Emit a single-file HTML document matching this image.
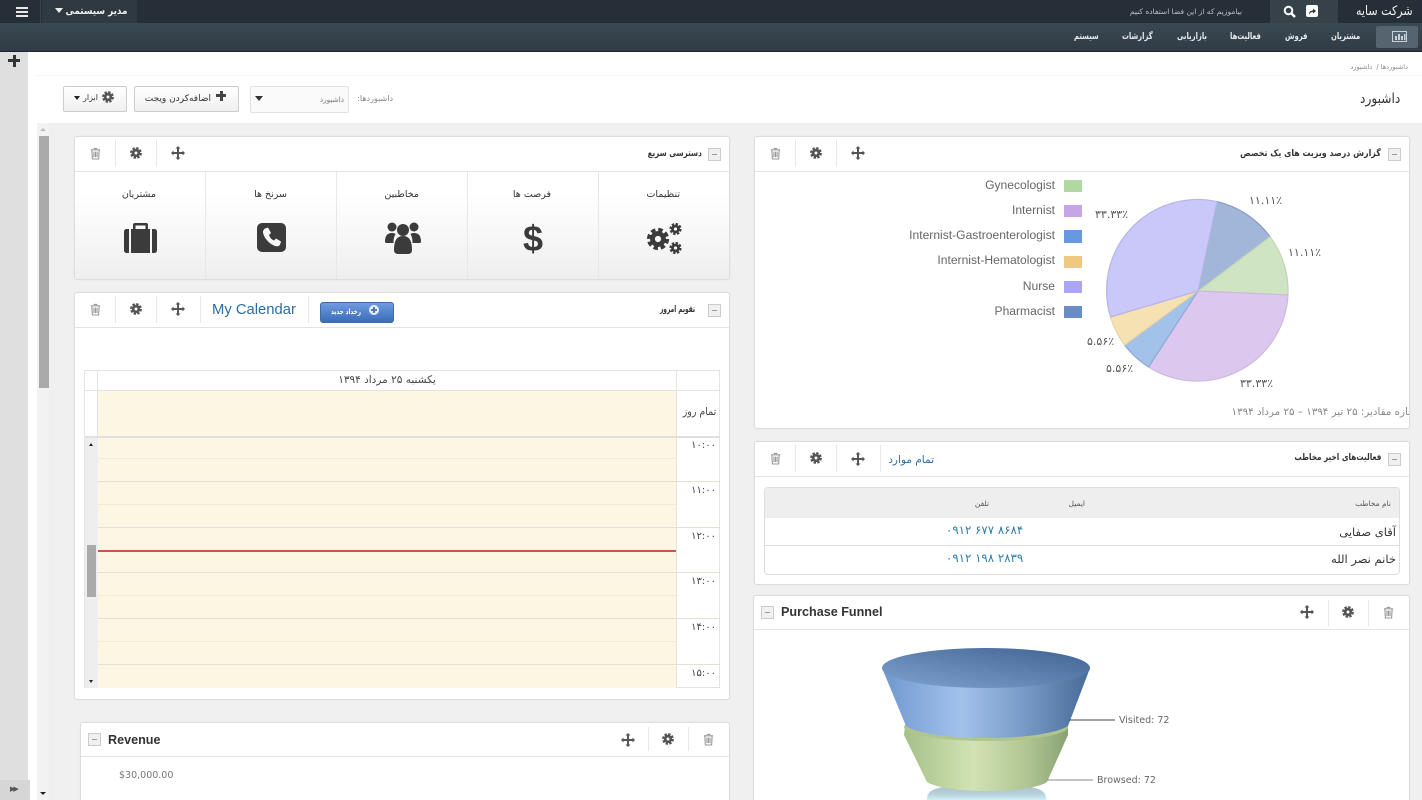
<!DOCTYPE html>
<html lang="fa"><head><meta charset="utf-8"><title>داشبورد</title>
<style>
html,body{margin:0;padding:0;width:1422px;height:800px;overflow:hidden}
body{position:relative;background:#f0f0f0;font-family:"DejaVu Sans","Liberation Sans",sans-serif;color:#333}
#root{position:absolute;left:0;top:0;width:1422px;height:800px;overflow:hidden}
.a{position:absolute}
.t{position:absolute;white-space:nowrap;line-height:1}
.r{direction:rtl;text-align:right;transform-origin:right center}
.e{font-family:"Liberation Sans",sans-serif}
.p{position:absolute;background:#fff;border:1px solid #ddd;border-radius:3px;box-sizing:border-box;box-shadow:0 0 1px #ddd}
.h{position:absolute;height:1px;background:#e3e3e3}
.v{position:absolute;width:1px;background:#e8e8e8}
.m{position:absolute;width:13px;height:13px;border:1px solid #ccc;background:#f0f0f0;box-sizing:border-box}
.m:after{content:"";position:absolute;left:3px;top:5px;width:5px;height:1px;background:#999}
svg{position:absolute;overflow:visible}
.nav{position:absolute;top:31px;color:#e6eaed;font-size:9px;font-weight:bold;direction:rtl;white-space:nowrap;line-height:12px;transform:scaleX(.76);transform-origin:left center}
.hl{position:absolute;left:98px;height:1px;background:#f1ebd3}
.hh{position:absolute;left:98px;width:622px;height:1px;background:#e3e1d3}
.tm{position:absolute;left:676px;width:40px;text-align:right;font-size:10px;color:#444;line-height:1}
</style></head><body><div id="root">
<svg width="0" height="0" style="position:absolute"><defs>
<symbol id="trash" viewBox="0 0 12 14"><path d="M4 1.500h4M1 3h10M2 3l.6 10h6.800L10 3M4.300 5v6M6 5v6M7.700 5v6" fill="none" stroke="#999" stroke-width="1.200"/></symbol>
<symbol id="gear" viewBox="0 0 14 14"><g fill="none" stroke="#555"><circle cx="7" cy="7" r="3.300" stroke-width="3.200"/><circle cx="7" cy="7" r="5.600" stroke-width="2.600" stroke-dasharray="2.800 1.600"/></g></symbol>
<symbol id="move" viewBox="0 0 14 14"><path fill="#555" d="M7 0l2.500 2.500H8V6h3.500V4.500L14 7l-2.500 2.500V8H8v3.500h1.500L7 14l-2.500-2.500H6V8H2.500v1.500L0 7l2.500-2.500V6H6V2.500H4.500z"/></symbol>
<linearGradient id="g1" x1="0" x2="1" y1="0" y2="0"><stop offset="0" stop-color="#6f97cf"/><stop offset=".38" stop-color="#a2c2ec"/><stop offset=".7" stop-color="#7598c4"/><stop offset="1" stop-color="#466a97"/></linearGradient>
<linearGradient id="g1t" x1="0" x2="1" y1="1" y2="0"><stop offset="0" stop-color="#7fa2d2"/><stop offset="1" stop-color="#3f6290"/></linearGradient>
<linearGradient id="g2" x1="0" x2="1" y1="0" y2="0"><stop offset="0" stop-color="#a5c088"/><stop offset=".42" stop-color="#d2e3b3"/><stop offset=".75" stop-color="#b0c592"/><stop offset="1" stop-color="#8aa273"/></linearGradient>
<linearGradient id="g3" x1="0" x2="0" y1="0" y2="1"><stop offset="0" stop-color="#a9c0c8"/><stop offset=".6" stop-color="#b5d0d8"/><stop offset="1" stop-color="#d0eef5"/></linearGradient>
</defs></svg>

<!-- top bars -->
<div class="a" style="left:0;top:0;width:1422px;height:23px;background:#262f37"></div>
<div class="a" style="left:0;top:23px;width:1422px;height:28px;background:linear-gradient(#3a4852,#303b45)"></div>
<div class="a" style="left:0;top:51px;width:1422px;height:1px;background:#1d242a"></div>
<div class="a" style="left:42px;top:0;width:95px;height:23px;background:#2f3941"></div>
<div class="a" style="left:40px;top:0;width:1px;height:23px;background:#38434c"></div>
<div class="a" style="left:16px;top:7px;width:12px;height:2px;background:#e8e8e8;box-shadow:0 4px 0 #e8e8e8,0 8px 0 #e8e8e8"></div>
<div class="a" style="left:55px;top:8px;width:0;height:0;border:4px solid transparent;border-top:5px solid #eee;border-bottom:0"></div>
<div class="t r" style="right:1295px;top:5px;font-size:10px;font-weight:bold;color:#f0f0f0;line-height:14px;transform:scaleX(.88)">مدیر سیستمی</div>
<div class="t r" style="right:180px;top:6px;font-size:7.500px;color:#b8bfc5;line-height:11px">بیاموزیم که از این فضا استفاده کنیم</div>
<div class="a" style="left:1270px;top:0;width:68px;height:23px;background:#36414a"></div>
<div class="a" style="left:1338px;top:0;width:84px;height:23px;background:#262f37"></div>
<div class="a" style="left:1337px;top:0;width:0;height:0;border-style:solid;border-width:11.500px 11px 11.500px 0;border-color:transparent #262f37 transparent transparent"></div>
<svg style="left:1283px;top:5px" width="13" height="13" viewBox="0 0 13 13"><circle cx="5.500" cy="5.500" r="3.800" fill="none" stroke="#fff" stroke-width="2"/><path d="M8.500 8.500L12 12" stroke="#fff" stroke-width="2.500"/></svg>
<svg style="left:1306px;top:5px" width="12" height="12" viewBox="0 0 12 12"><rect width="12" height="12" rx="2" fill="#fff"/><path d="M3 9.500C3 6.500 5 5.500 7 5.500V3.500L10 6 7 8.500V7C5 7 4 8 3 9.500z" fill="#2b343c"/></svg>
<div class="t r" style="right:9px;top:4px;font-size:13px;color:#f2f2f2;line-height:16px;transform:scaleX(.85)">شرکت سایه</div>

<div class="a" style="left:1376px;top:26px;width:42px;height:22px;background:#56646f;border-radius:2px"></div>
<svg style="left:1392px;top:31px" width="15" height="11" viewBox="0 0 15 11"><rect x=".5" y=".5" width="14" height="10" fill="none" stroke="#c8d0d6"/><path d="M3 9V5h2v4zM6 9V3h2v6zM9 9V5h2v4zM12 9V3h1.500v6z" fill="#c8d0d6"/></svg>
<div class="nav" style="left:1331px">مشتریان</div>
<div class="nav" style="left:1285px">فروش</div>
<div class="nav" style="left:1230px">فعالیت‌ها</div>
<div class="nav" style="left:1177px">بازاریابی</div>
<div class="nav" style="left:1122px">گزارشات</div>
<div class="nav" style="left:1074px">سیستم</div>

<!-- sidebar -->
<div class="a" style="left:0;top:52px;width:28px;height:748px;background:#dfdfdf"></div>
<div class="a" style="left:28px;top:52px;width:9px;height:748px;background:#fff"></div>
<div class="a" style="left:8px;top:59px;width:12px;height:3px;background:#333"></div>
<div class="a" style="left:12.500px;top:55px;width:3px;height:12px;background:#333"></div>
<div class="a" style="left:0;top:780px;width:30px;height:20px;background:#d6d6d6"></div>
<div class="t" style="left:10px;top:786px;font-size:7px;color:#555;letter-spacing:-2px">▶▶</div>

<!-- page header -->
<div class="a" style="left:37px;top:52px;width:1385px;height:71px;background:#fff"></div>
<div class="h" style="left:37px;top:75px;width:1385px;background:#f3f3f3"></div>
<div class="t r" style="right:14px;top:62px;font-size:6.600px;color:#888;line-height:10px">داشبوردها /&nbsp; داشبورد</div>
<div class="t r" style="right:22px;top:90px;font-size:14px;color:#333;line-height:18px;transform:scaleX(.87)">داشبورد</div>

<div class="a" style="left:63px;top:86px;width:64px;height:26px;box-sizing:border-box;border:1px solid #ccc;border-radius:2px;background:linear-gradient(#fff,#f0f0f0)"></div>
<div class="a" style="left:74px;top:96px;width:0;height:0;border:3px solid transparent;border-top:4px solid #222;border-bottom:0"></div>
<div class="t r" style="right:1324px;top:92px;font-size:8px;color:#333;line-height:12px">ابزار</div>
<svg style="left:102px;top:91px" width="12" height="12"><use href="#gear"/></svg>
<div class="a" style="left:134px;top:86px;width:105px;height:26px;box-sizing:border-box;border:1px solid #ccc;border-radius:2px;background:linear-gradient(#fff,#f0f0f0)"></div>
<div class="t r" style="right:1211px;top:93px;font-size:9px;color:#333;line-height:12px">اضافه‌کردن ویجت</div>
<div class="a" style="left:216px;top:94px;width:10px;height:3px;background:#444"></div>
<div class="a" style="left:219.500px;top:91px;width:3px;height:10px;background:#444"></div>
<div class="a" style="left:250px;top:86px;width:99px;height:27px;box-sizing:border-box;border:1px solid #e2e2e2;border-radius:2px;background:#fafafa"></div>
<div class="a" style="left:255px;top:96px;width:0;height:0;border:4px solid transparent;border-top:5px solid #333;border-bottom:0"></div>
<div class="t r" style="right:1078px;top:94px;font-size:7.300px;color:#777;line-height:11px">داشبورد</div>
<div class="t r" style="right:1029px;top:93px;font-size:8px;color:#888;line-height:11px">داشبوردها:</div>

<!-- main scrollbar -->
<div class="a" style="left:37px;top:123px;width:12px;height:677px;background:#f2f2f2"></div>
<div class="a" style="left:38.500px;top:136px;width:10px;height:252px;background:#aaa"></div>
<div class="a" style="left:40px;top:128px;width:0;height:0;border:3px solid transparent;border-bottom:3px solid #bbb;border-top:0"></div>
<div class="a" style="left:40px;top:792px;width:0;height:0;border:3px solid transparent;border-top:3px solid #222;border-bottom:0"></div>

<!-- pie panel -->
<div class="p" style="left:754px;top:136px;width:656px;height:293px"></div>
<div class="h" style="left:755px;top:171px;width:654px"></div>
<div class="v" style="left:795px;top:140px;height:27px"></div><div class="v" style="left:836px;top:140px;height:27px"></div>
<svg style="left:770px;top:147px" width="11" height="13"><use href="#trash"/></svg>
<svg style="left:810px;top:147px" width="12" height="12"><use href="#gear"/></svg>
<svg style="left:851px;top:146px" width="14" height="14"><use href="#move"/></svg>
<div class="m" style="left:1388px;top:148px"></div>
<div class="t r" style="right:41px;top:148px;font-size:9px;font-weight:bold;color:#333;line-height:13px;transform:scaleX(.88)">گزارش درصد ویزیت های یک تخصص</div>

<div class="t e" style="right:367px;top:179px;font-size:12.100px;color:#666">Gynecologist</div>
<div class="t e" style="right:367px;top:204px;font-size:12.100px;color:#666">Internist</div>
<div class="t e" style="right:367px;top:229px;font-size:12.100px;color:#666">Internist-Gastroenterologist</div>
<div class="t e" style="right:367px;top:254px;font-size:12.100px;color:#666">Internist-Hematologist</div>
<div class="t e" style="right:367px;top:280px;font-size:12.100px;color:#666">Nurse</div>
<div class="t e" style="right:367px;top:305px;font-size:12.100px;color:#666">Pharmacist</div>
<div class="a" style="left:1064px;top:180px;width:18px;height:12px;background:#b1d8a2"></div>
<div class="a" style="left:1064px;top:205px;width:18px;height:12px;background:#c5a5e6"></div>
<div class="a" style="left:1064px;top:230px;width:18px;height:13px;background:#6699dd"></div>
<div class="a" style="left:1064px;top:256px;width:18px;height:12px;background:#eec97f"></div>
<div class="a" style="left:1064px;top:281px;width:18px;height:12px;background:#aaa5f5"></div>
<div class="a" style="left:1064px;top:306px;width:18px;height:12px;background:#6a8cc4"></div>

<svg style="left:0;top:0" width="1422" height="800">
<g stroke-width="1.200" stroke-linejoin="round">
<path d="M1198 291L1217 201.600A91 91 0 0 1 1270 236.700Z" fill="#a1b6d8" stroke="#8799c8"/>
<path d="M1198 291L1270 236.700A91 91 0 0 1 1288 295Z" fill="#cfe4c3" stroke="#bfd4b4"/>
<path d="M1198 291L1288 295A91 91 0 0 1 1148.600 367Z" fill="#dcc8ee" stroke="#cdb9df"/>
<path d="M1198 291L1148.600 367A91 91 0 0 1 1124.600 345Z" fill="#a3c2ea" stroke="#8fa9d8"/>
<path d="M1198 291L1124.600 345A91 91 0 0 1 1110.500 317Z" fill="#f5e1b2" stroke="#e6d3a6"/>
<path d="M1198 291L1110.500 317A91 91 0 0 1 1217 201.600Z" fill="#c9c8f8" stroke="#b8b5e6"/>
</g></svg>
<div class="t" style="left:1249px;top:195px;font-size:11px;color:#555">۱۱.۱۱٪</div>
<div class="t" style="left:1288px;top:247px;font-size:11px;color:#555">۱۱.۱۱٪</div>
<div class="t" style="left:1095px;top:209px;font-size:11px;color:#555">۳۳.۳۳٪</div>
<div class="t" style="left:1240px;top:378px;font-size:11px;color:#555">۳۳.۳۳٪</div>
<div class="t" style="left:1087px;top:336px;font-size:11px;color:#555">۵.۵۶٪</div>
<div class="t" style="left:1106px;top:363px;font-size:11px;color:#555">۵.۵۶٪</div>
<div class="a" style="left:1220px;top:403px;width:189px;height:18px;overflow:hidden"><div class="t r" style="right:-2px;top:3px;font-size:10.300px;color:#888;line-height:13px">بازه مقادیر: ۲۵ تیر ۱۳۹۴ – ۲۵ مرداد ۱۳۹۴</div></div>

<!-- contacts panel -->
<div class="p" style="left:754px;top:441px;width:656px;height:144px"></div>
<div class="h" style="left:755px;top:476px;width:654px"></div>
<div class="v" style="left:795px;top:445px;height:27px"></div><div class="v" style="left:836px;top:445px;height:27px"></div><div class="v" style="left:880px;top:445px;height:27px"></div>
<svg style="left:770px;top:452px" width="11" height="13"><use href="#trash"/></svg>
<svg style="left:810px;top:452px" width="12" height="12"><use href="#gear"/></svg>
<svg style="left:851px;top:452px" width="14" height="14"><use href="#move"/></svg>
<div class="t r" style="right:488px;top:453px;font-size:10.500px;color:#2d6ca2;line-height:14px">تمام موارد</div>
<div class="m" style="left:1388px;top:453px"></div>
<div class="t r" style="right:41px;top:452px;font-size:9px;font-weight:bold;color:#333;line-height:13px;transform:scaleX(.81)">فعالیت‌های اخیر مخاطب</div>
<div class="a" style="left:764px;top:487px;width:636px;height:88px;box-sizing:border-box;border:1px solid #ddd;border-radius:4px;overflow:hidden;background:#fff">
<div class="a" style="left:0;top:0;width:636px;height:30px;background:#eee"></div>
<div class="a" style="left:0;top:57px;width:636px;height:1px;background:#ddd"></div>
</div>
<div class="t r" style="right:31px;top:499px;font-size:7.500px;color:#555;line-height:10px">نام مخاطب</div>
<div class="t r" style="right:337px;top:499px;font-size:7.500px;color:#555;line-height:10px">ایمیل</div>
<div class="t r" style="right:433px;top:499px;font-size:7.500px;color:#555;line-height:10px">تلفن</div>
<div class="t r" style="right:26px;top:525px;font-size:11.500px;color:#333;line-height:15px">آقای صفایی</div>
<div class="t r" style="right:26px;top:552px;font-size:11.500px;color:#333;line-height:15px">خانم نصر الله</div>
<div class="t" style="left:946px;top:525px;font-size:11.800px;color:#2d7cb0;letter-spacing:.2px">۰۹۱۲ ۶۷۷ ۸۶۸۴</div>
<div class="t" style="left:946px;top:553px;font-size:11.800px;color:#2d7cb0;letter-spacing:.2px">۰۹۱۲ ۱۹۸ ۲۸۳۹</div>

<!-- funnel panel -->
<div class="p" style="left:753px;top:595px;width:657px;height:215px"></div>
<div class="h" style="left:754px;top:629px;width:655px"></div>
<div class="m" style="left:761px;top:606px"></div>
<div class="t e" style="left:781px;top:606px;font-size:12.600px;font-weight:bold;color:#333">Purchase Funnel</div>
<div class="v" style="left:1328px;top:600px;height:26px"></div><div class="v" style="left:1368px;top:600px;height:26px"></div>
<svg style="left:1300px;top:605px" width="14" height="14"><use href="#move"/></svg>
<svg style="left:1342px;top:606px" width="12" height="12"><use href="#gear"/></svg>
<svg style="left:1383px;top:606px" width="11" height="13"><use href="#trash"/></svg>
<svg style="left:0;top:0" width="1422" height="800">
<path d="M927 800C927 790 932 785 987 784 1042 785 1046 790 1046 800Z" fill="url(#g3)"/>
<path d="M904 735L905 726H1068L1068 735 1047 782C1030 794 945 794 927 782Z" fill="url(#g2)"/>
<ellipse cx="986" cy="727" rx="82" ry="14" fill="#b0c48e"/>
<path d="M882 668L906 726C930 742 1042 742 1068 726L1090 668Z" fill="url(#g1)"/>
<ellipse cx="986" cy="668" rx="104" ry="20" fill="url(#g1t)"/>
<path d="M1069 720H1115" stroke="#444" stroke-width="1"/>
<path d="M1047 780H1093" stroke="#888" stroke-width="1"/>
</svg>
<div class="t" style="left:1119px;top:716px;font-size:9.500px;color:#666;font-family:'DejaVu Sans',sans-serif">Visited: 72</div>
<div class="t" style="left:1097px;top:776px;font-size:9.500px;color:#666;font-family:'DejaVu Sans',sans-serif">Browsed: 72</div>

<!-- quick access -->
<div class="p" style="left:74px;top:136px;width:656px;height:144px"></div>
<div class="a" style="left:75px;top:172px;width:654px;height:107px;background:linear-gradient(#fff 20%,#efefef)"></div>
<div class="h" style="left:75px;top:171px;width:654px"></div>
<div class="v" style="left:115px;top:140px;height:27px"></div><div class="v" style="left:156px;top:140px;height:27px"></div>
<div class="v" style="left:205px;top:172px;height:107px"></div><div class="v" style="left:336px;top:172px;height:107px"></div><div class="v" style="left:467px;top:172px;height:107px"></div><div class="v" style="left:598px;top:172px;height:107px"></div>
<svg style="left:90px;top:147px" width="11" height="13"><use href="#trash"/></svg>
<svg style="left:130px;top:147px" width="12" height="12"><use href="#gear"/></svg>
<svg style="left:171px;top:146px" width="14" height="14"><use href="#move"/></svg>
<div class="m" style="left:708px;top:148px"></div>
<div class="t r" style="right:720px;top:148px;font-size:9px;font-weight:bold;color:#333;line-height:13px;transform:scaleX(.8)">دسترسی سریع</div>
<div class="t r" style="right:742px;top:188px;font-size:9.500px;color:#333;line-height:13px">تنظیمات</div>
<div class="t r" style="right:871px;top:188px;font-size:9.500px;color:#333;line-height:13px">فرصت ها</div>
<div class="t r" style="right:1003px;top:188px;font-size:9.500px;color:#333;line-height:13px">مخاطبین</div>
<div class="t r" style="right:1135px;top:188px;font-size:9.500px;color:#333;line-height:13px">سرنخ ها</div>
<div class="t r" style="right:1266px;top:188px;font-size:9.500px;color:#333;line-height:13px">مشتریان</div>
<svg style="left:123px;top:222px" width="35" height="32" viewBox="0 0 35 32"><path fill="#3b3b3b" d="M10 7V3a2 2 0 0 1 2-2h11a2 2 0 0 1 2 2v4h-2.500V3.500h-10V7z"/><path fill="#3b3b3b" d="M1 9.500A2.500 2.500 0 0 1 3.500 7H6v24H3.500A2.500 2.500 0 0 1 1 28.500zM8 7h19v24H8zM29 7h2.500A2.500 2.500 0 0 1 34 9.500v19a2.500 2.500 0 0 1-2.500 2.500H29z"/></svg>
<svg style="left:257px;top:223px" width="29" height="29" viewBox="0 0 29 29"><rect width="29" height="29" rx="5" fill="#3b3b3b"/><path fill="#f7f7f7" d="M8 5.500l3-1 3 5.500-2 2c.8 2.500 2.500 4.500 5 5.500l2-2 5 3-1 3.200c-.8 1.300-2.500 1.800-4 1.500C13.500 22 7 15.500 6 9.500c-.2-1.600.7-3.200 2-4z"/></svg>
<svg style="left:385px;top:221px" width="36" height="34" viewBox="0 0 36 34"><g fill="#3b3b3b"><circle cx="7" cy="6" r="4.500"/><circle cx="29" cy="6" r="4.500"/><path d="M0 21c0-6 2-9 7-9 1.500 0 2.500.3 3.500 1-.8 1.500-2 4-2 8v1H2c-1.500 0-2-.5-2-1zM36 21c0-6-2-9-7-9-1.500 0-2.500.3-3.500 1 .8 1.500 2 4 2 8v1H34c1.500 0 2-.5 2-1z"/><circle cx="18" cy="9" r="6"/><path d="M9 29c0-8 2-14 9-14s9 6 9 14c0 3-2 4-4 4H13c-2 0-4-1-4-4z"/></g></svg>
<div class="t e" style="left:523px;top:217px;font-size:36px;color:#3b3b3b;line-height:44px;font-weight:bold">$</div>
<svg style="left:646px;top:222px" width="36" height="32" viewBox="0 0 36 32"><g fill="none" stroke="#3b3b3b"><circle cx="12" cy="17" r="5.500" stroke-width="4.800"/><circle cx="12" cy="17" r="9.200" stroke-width="3.800" stroke-dasharray="4.400 2.820"/><circle cx="29.500" cy="7" r="3" stroke-width="2.800"/><circle cx="29.500" cy="7" r="5" stroke-width="2.200" stroke-dasharray="2.400 1.520"/><circle cx="29.500" cy="26" r="3" stroke-width="2.800"/><circle cx="29.500" cy="26" r="5" stroke-width="2.200" stroke-dasharray="2.400 1.520"/></g></svg>

<!-- calendar panel -->
<div class="p" style="left:74px;top:292px;width:656px;height:408px"></div>
<div class="h" style="left:75px;top:327px;width:654px"></div>
<div class="v" style="left:115px;top:296px;height:27px"></div><div class="v" style="left:156px;top:296px;height:27px"></div><div class="v" style="left:200px;top:296px;height:27px"></div><div class="v" style="left:308px;top:296px;height:27px"></div>
<svg style="left:90px;top:303px" width="11" height="13"><use href="#trash"/></svg>
<svg style="left:130px;top:303px" width="12" height="12"><use href="#gear"/></svg>
<svg style="left:171px;top:302px" width="14" height="14"><use href="#move"/></svg>
<div class="t e" style="left:212px;top:303px;font-size:14.800px;color:#2d6ca2">My Calendar</div>
<div class="a" style="left:320px;top:302px;width:74px;height:21px;border-radius:3px;background:linear-gradient(#6f9be0,#3a6cb8);border:1px solid #3f6dab;box-sizing:border-box"></div>
<div class="a" style="left:369px;top:305px;width:10px;height:10px;border-radius:50%;background:#e8f0fa"></div>
<div class="a" style="left:371px;top:309px;width:6px;height:2px;background:#4a7ac4"></div><div class="a" style="left:373px;top:307px;width:2px;height:6px;background:#4a7ac4"></div>
<div class="t r" style="right:1061px;top:306px;font-size:7.500px;color:#fff;line-height:11px;font-weight:bold;transform:scaleX(.75)">رخداد جدید</div>
<div class="m" style="left:708px;top:304px"></div>
<div class="t r" style="right:727px;top:304px;font-size:9px;font-weight:bold;color:#333;line-height:13px;transform:scaleX(.65)">تقویم امروز</div>

<div class="a" style="left:84px;top:370px;width:636px;height:318px;box-sizing:border-box;border:1px solid #e3e3e3;background:#fff"></div>
<div class="a" style="left:98px;top:390px;width:578px;height:46px;background:#fdf6e3"></div>
<div class="a" style="left:98px;top:438px;width:578px;height:250px;background:#fdf6e3"></div>
<div class="a" style="left:85px;top:438px;width:13px;height:250px;background:#eee"></div>
<div class="a" style="left:87px;top:545px;width:9px;height:52px;background:#aaa"></div>
<div class="a" style="left:89px;top:443px;width:0;height:0;border:2.500px solid transparent;border-bottom:3px solid #222;border-top:0"></div>
<div class="a" style="left:89px;top:680px;width:0;height:0;border:2.500px solid transparent;border-top:3px solid #222;border-bottom:0"></div>
<div class="h" style="left:85px;top:390px;width:635px;background:#e3e3e3"></div>
<div class="h" style="left:85px;top:436px;width:635px;height:2px;background:#e0e0e0"></div>
<div class="v" style="left:97px;top:371px;height:66px;background:#e3e3e3"></div>
<div class="v" style="left:676px;top:371px;height:316px;background:#e3e3e3"></div>
<div class="hl" style="top:458px;width:578px"></div><div class="hh" style="top:481px"></div>
<div class="hl" style="top:504px;width:578px"></div><div class="hh" style="top:527px"></div>
<div class="hl" style="top:595px;width:578px"></div><div class="hh" style="top:572px"></div>
<div class="hl" style="top:641px;width:578px"></div><div class="hh" style="top:618px"></div><div class="hh" style="top:664px"></div>
<div class="a" style="left:98px;top:550px;width:578px;height:2px;background:#c9564a"></div>
<div class="t r" style="left:98px;width:578px;top:373px;text-align:center;font-size:10.500px;color:#444;line-height:15px">یکشنبه ۲۵ مرداد ۱۳۹۴</div>
<div class="t r" style="right:706px;top:405px;font-size:10.500px;color:#444;line-height:15px;transform:scaleX(.9)">تمام روز</div>
<div class="tm" style="top:441px">۱۰:۰۰</div>
<div class="tm" style="top:486px">۱۱:۰۰</div>
<div class="tm" style="top:532px">۱۲:۰۰</div>
<div class="tm" style="top:577px">۱۳:۰۰</div>
<div class="tm" style="top:623px">۱۴:۰۰</div>
<div class="tm" style="top:669px">۱۵:۰۰</div>

<!-- revenue -->
<div class="p" style="left:80px;top:722px;width:650px;height:90px"></div>
<div class="h" style="left:81px;top:756px;width:648px"></div>
<div class="m" style="left:88px;top:733px"></div>
<div class="t e" style="left:108px;top:734px;font-size:12.600px;font-weight:bold;color:#333">Revenue</div>
<div class="v" style="left:648px;top:727px;height:24px"></div><div class="v" style="left:688px;top:727px;height:24px"></div>
<svg style="left:621px;top:733px" width="14" height="14"><use href="#move"/></svg>
<svg style="left:662px;top:733px" width="12" height="12"><use href="#gear"/></svg>
<svg style="left:703px;top:733px" width="11" height="13"><use href="#trash"/></svg>
<div class="t" style="left:119px;top:771px;font-size:9.500px;color:#777">$30,000.00</div>
</div></body></html>
